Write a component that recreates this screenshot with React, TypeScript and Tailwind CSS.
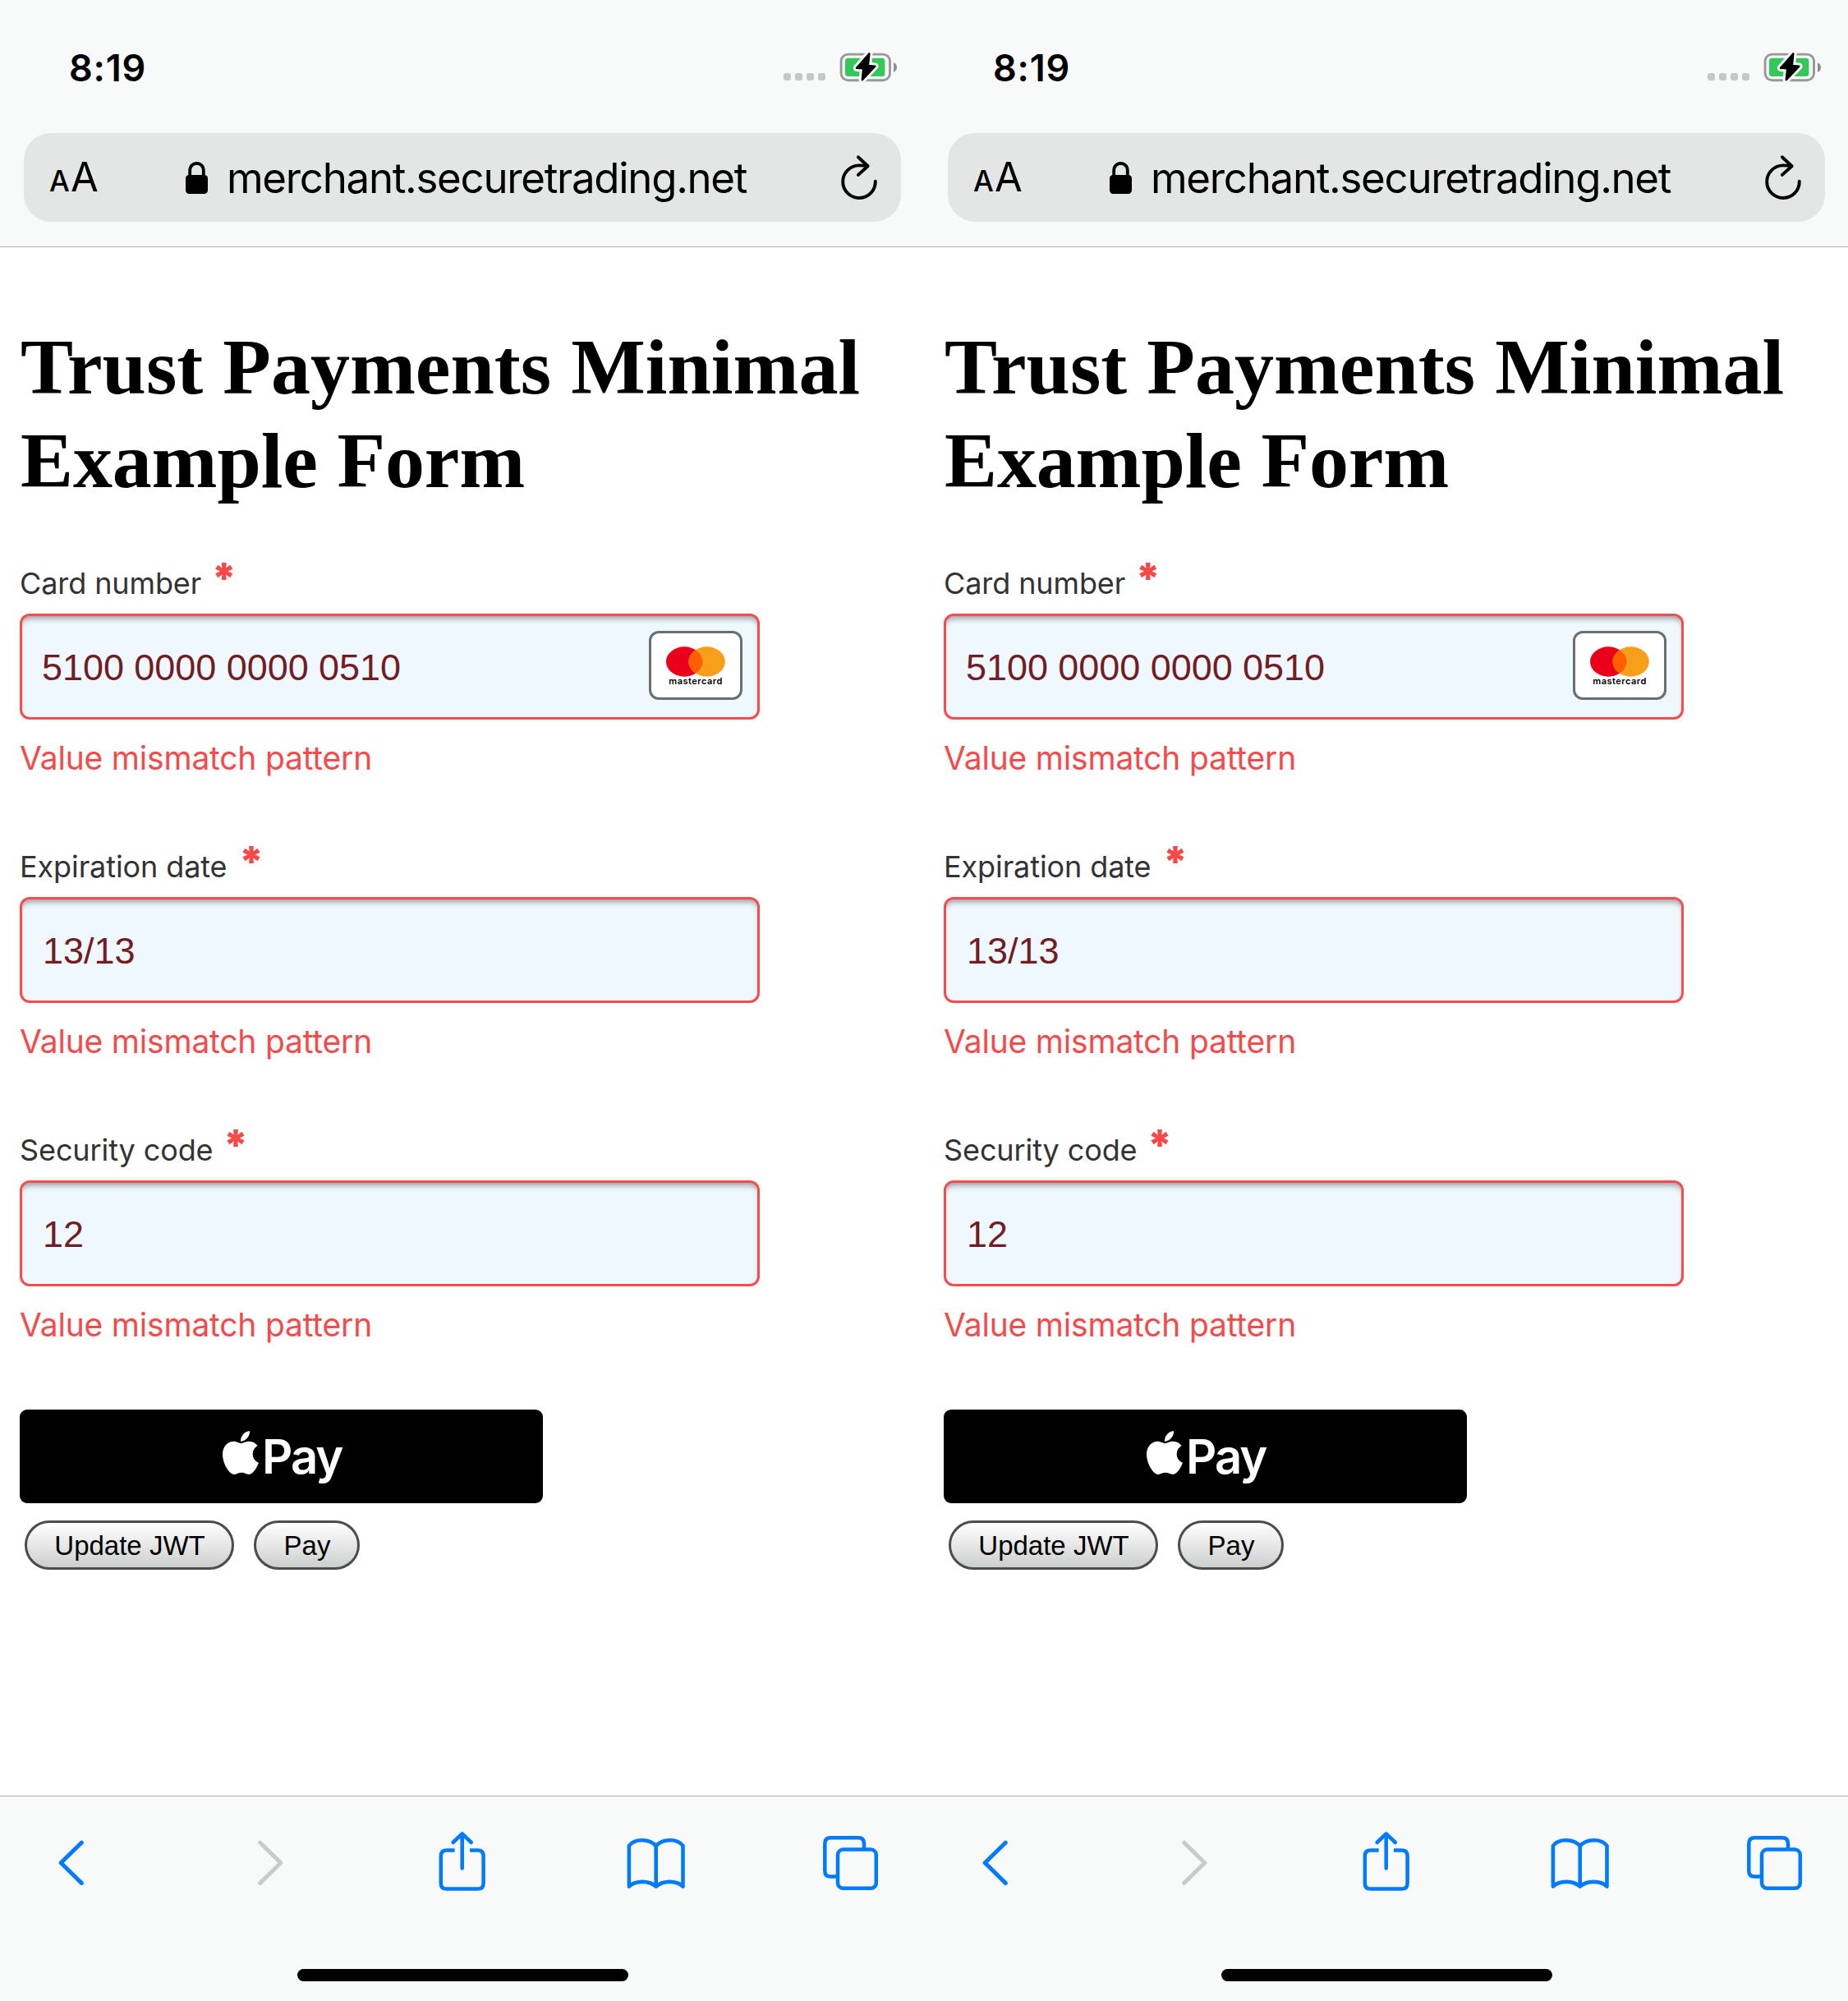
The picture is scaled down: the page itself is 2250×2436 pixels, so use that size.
const FIELDS = [
  { label: "Card number", value: "5100 0000 0000 0510", card: true, star: "ml-[12px]", inset: "pl-[24px]" },
  { label: "Expiration date", value: "13/13", card: false, star: "ml-[14px]", inset: "pl-[25px]" },
  { label: "Security code", value: "12", card: false, star: "ml-[12px]", inset: "pl-[25px]" },
];

function Battery() {
  const bolt = "M37.4 3.3 L35.8 18 L44.4 18.7 L28.8 35.2 L30.2 21.4 L22 20.8 Z";
  return (
    <svg width="71" height="40" viewBox="0 0 71 40" className="ml-4">
      <rect x="3.1" y="4.1" width="59.4" height="31.6" rx="8.5" fill="none" stroke="#979898" strokeWidth="2.9" />
      <rect x="8" y="8.7" width="48.4" height="22.4" rx="3.6" fill="#34c759" />
      <path d="M67 14.3 Q71 16 71 20.1 Q71 24.2 67 26 Z" fill="#8c8d8d" />
      <path d={bolt} fill="#f8faf9" stroke="#f8faf9" strokeWidth="8.4" strokeLinejoin="round" />
      <path d={bolt} fill="#000" stroke="#000" strokeWidth="2.4" strokeLinejoin="round" />
    </svg>
  );
}

function StatusBar() {
  return (
    <div className="flex h-[162px] items-center pr-[33px] pl-[84px] pt-[2px]">
      <span className="mt-[1px] text-[45px] leading-[60px] font-semibold tracking-[0.8px] text-black">8:19</span>
      <div className="mt-[22px] ml-auto flex gap-[5px]">
        {[0, 1, 2, 3].map((i) => (
          <span key={i} className="size-[9px] rounded-[3px] bg-[#c6c8c7]" />
        ))}
      </div>
      <Battery />
    </div>
  );
}

function AddressBar() {
  return (
    <div className="mr-[28px] ml-[29px] flex h-[108px] items-center rounded-[33px] bg-[#e4e6e5] pr-[28px] pl-[31px] text-black">
      <div className="mt-[3px] flex w-[166px] items-baseline leading-[108px]">
        <span className="w-[26px] text-[35px] font-medium">A</span>
        <span className="text-[49px]">A</span>
      </div>
      <svg width="27" height="39" viewBox="0 0 27 39">
        <path d="M5.2 18 V10.5 C5.2 -1 21.8 -1 21.8 10.5 V18" fill="none" stroke="#000" strokeWidth="3.8" />
        <rect x="0" y="16" width="27" height="23" rx="4.2" fill="#000" />
      </svg>
      <span className="mt-[1px] ml-[23px] text-[51px] leading-[108px] tracking-[-1.3px] whitespace-nowrap">merchant.securetrading.net</span>
      <svg width="46" height="56" viewBox="0 0 46 56" className="ml-auto" fill="none" stroke="#000" strokeWidth="3.9" strokeLinecap="round" strokeLinejoin="round">
        <path d="M42.8 32.7 A19.8 19.8 0 1 1 22.8 13.4 Q28.6 13.3 33.3 14.2" />
        <path d="M21.9 3.3 L33.6 14.2 L21.9 24.9" />
      </svg>
    </div>
  );
}

function Mastercard() {
  return (
    <div className="-mt-[3px] flex h-[84px] w-[114px] flex-col items-center rounded-[12px] border-[3px] border-[#696e6f] bg-white pt-[16px]">
      <svg width="72" height="37" viewBox="0 0 72 37">
        <defs>
          <clipPath id="disc">
            <ellipse cx="22.2" cy="18.5" rx="22.2" ry="18.2" />
          </clipPath>
        </defs>
        <ellipse cx="22.2" cy="18.5" rx="22.2" ry="18.2" fill="#eb001b" />
        <ellipse cx="49.6" cy="18.5" rx="22.2" ry="18.2" fill="#f79e1b" />
        <ellipse cx="49.6" cy="18.5" rx="22.2" ry="18.2" fill="#ff5f00" clipPath="url(#disc)" />
      </svg>
      <span className="text-[11px] leading-[11px] font-semibold tracking-[0.5px] text-black">mastercard</span>
    </div>
  );
}

function Field({ label, value, card, star, inset }: (typeof FIELDS)[number]) {
  return (
    <div className="mb-[82px] w-[901px]">
      <div className="flex h-[50px]">
        <span className="text-[36px] leading-[50px] tracking-[-0.1px] whitespace-nowrap text-[#333]">{label}</span>
        <span className={`${star} -mt-[3px] text-[51px] leading-[44px] font-black text-[#f94848]`}>*</span>
      </div>
      <div
        className={`${inset} mt-[12px] flex h-[129px] items-center justify-between rounded-[12px] border-[3px] border-[#f84b4b] bg-[#f0f8ff] pr-[18px] shadow-[inset_0_7px_7px_-4px_rgba(0,0,0,0.38)]`}
      >
        <span className="mt-[2px] font-['Liberation_Sans',sans-serif] text-[45px] leading-[60px] tracking-[-0.05px] text-[#721c24]">{value}</span>
        {card && <Mastercard />}
      </div>
      <div className="mt-[22px] text-[39px] leading-[50px] tracking-[-0.2px] text-[#f64a4a]">Value mismatch pattern</div>
    </div>
  );
}

function FormButton({ children, width }: { children: string; width: string }) {
  return (
    <button
      className={`${width} h-[60px] rounded-full border-[3px] border-[#4c4c4c] bg-linear-to-b from-white to-[#cdcfce] pt-[1px] pl-[1px] text-center font-['Liberation_Sans',sans-serif] text-[33px] leading-[53px] text-black`}
    >
      {children}
    </button>
  );
}

function Chevron({ d, className }: { d: string; className: string }) {
  return (
    <svg width="31" height="76" viewBox="0 0 31 76" className={className} fill="none" strokeWidth="5" strokeLinecap="round" strokeLinejoin="round">
      <path d={d} />
    </svg>
  );
}

function Toolbar() {
  return (
    <div className="h-[250px] border-t border-[#b1b4b3] bg-[#f8faf9] pt-[41px]">
      <div className="flex h-[76px] pl-[71px]">
        <Chevron d="M28.3 15.2 L3.2 39.8 L28.3 64.4" className="stroke-[#007aff]" />
        <Chevron d="M2.7 15.2 L27.8 39.8 L2.7 64.4" className="ml-[212px] stroke-[#c9cbca]" />
        <svg width="58" height="76" viewBox="0 0 58 76" className="ml-[189px]" fill="none" stroke="#007aff" strokeWidth="4.5" strokeLinejoin="round">
          <path d="M19.6 24.6 H10 Q2.8 24.6 2.8 31.8 V64.4 Q2.8 71.6 10 71.6 H47.4 Q54.6 71.6 54.6 64.4 V31.8 Q54.6 24.6 47.4 24.6 H38" />
          <path d="M28.7 46.4 V4.6 M17.6 15 L28.7 4.4 L39.8 15" strokeLinecap="round" />
        </svg>
        <svg width="72" height="76" viewBox="0 0 72 76" className="ml-[171px]" fill="none" stroke="#007aff" strokeWidth="4.6" strokeLinecap="round" strokeLinejoin="round">
          <path d="M35.7 19.5 C28 10 9.5 10 2.9 19 V68.6 C11 61 27 61 35.7 68.6 C44.4 61 60.4 61 68.5 68.6 V19 C61.9 10 43.4 10 35.7 19.5 V68.6" />
        </svg>
        <svg width="70" height="76" viewBox="0 0 70 76" className="ml-[166px]" fill="none" stroke="#007aff" strokeWidth="4.5">
          <path d="M17.5 56.6 H10.4 Q3.3 56.6 3.3 49.5 V16.4 Q3.3 9.3 10.4 9.3 H43.9 Q51 9.3 51 16.4 V22.5" />
          <rect x="19" y="23.6" width="46.8" height="47.1" rx="6.5" />
        </svg>
      </div>
      <div className="mt-[93px] ml-[362px] h-[15px] w-[403px] rounded-full bg-black" />
    </div>
  );
}

function Phone() {
  return (
    <div className="flex h-[2436px] w-[1125px] flex-col overflow-hidden bg-white font-['Inter',sans-serif]">
      <div className="h-[301px] border-b border-[#b1b4b3] bg-[#f8faf9]">
        <StatusBar />
        <AddressBar />
      </div>
      <main className="flex-1 pt-[89px] pl-[24px]">
        <h1 className="mb-[67px] ml-[1px] font-['Liberation_Serif',serif] text-[96px] leading-[114px] font-bold whitespace-nowrap text-black">
          Trust Payments Minimal
          <br />
          <span className="tracking-[-0.15px]">Example Form</span>
        </h1>
        {FIELDS.map((f) => (
          <Field key={f.label} {...f} />
        ))}
        <div className="-mt-[4px] flex h-[114px] w-[637px] items-start rounded-[9px] bg-black pl-[247px]">
          <svg width="44" height="53" viewBox="4 32 377 448" preserveAspectRatio="none" fill="#fff" className="mt-[26px]">
            <path d="M318.7 268.7c-.2-36.7 16.4-64.4 50-84.8-18.8-26.9-47.2-41.7-84.7-44.6-35.5-2.8-74.3 20.7-88.5 20.7-15 0-49.4-19.7-76.4-19.7C63.3 141.2 4 184.8 4 273.5q0 39.3 14.4 81.2c12.8 36.7 59 126.7 107.2 125.2 25.2-.6 43-17.9 75.8-17.9 31.8 0 48.3 17.9 76.4 17.9 48.6-.7 90.4-82.5 102.6-119.3-65.2-30.7-61.7-90-61.7-91.9zm-56.6-164.2c27.3-32.4 24.8-61.9 24-72.5-24.1 1.4-52 16.4-67.9 34.9-17.5 19.8-27.8 44.3-25.6 71.9 26.1 2 49.9-11.4 69.5-34.3z" />
          </svg>
          <span className="ml-[4px] text-[58px] leading-[114px] font-semibold tracking-[-2px] text-white">Pay</span>
        </div>
        <div className="mt-[21px] ml-[6px] flex gap-[24px]">
          <FormButton width="w-[255px]">Update JWT</FormButton>
          <FormButton width="w-[129px]">Pay</FormButton>
        </div>
      </main>
      <Toolbar />
    </div>
  );
}

export default function App() {
  return (
    <div className="flex w-[2250px]">
      <Phone />
      <Phone />
    </div>
  );
}
